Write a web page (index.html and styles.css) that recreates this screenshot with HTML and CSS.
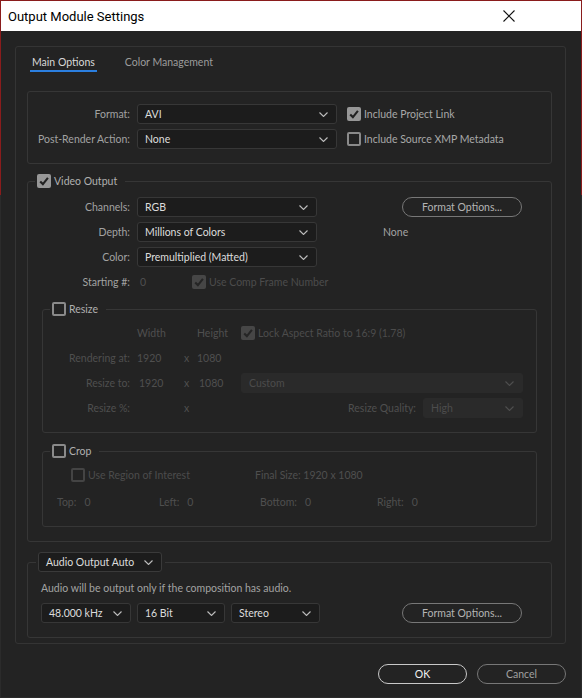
FILE: index.html
```html
<!DOCTYPE html>
<html lang="en">
<head>
    <meta charset="UTF-8">
    <title>Output Module Settings</title>
    <link rel="stylesheet" href="styles.css">
</head>
<body>
    <div class="window">
        <header class="titlebar">
            <span class="title">Output Module Settings</span>
            <span class="close">
                <svg width="12" height="12" viewBox="0 0 12 12"><path d="M0.5 0.5 L11.5 11.5 M11.5 0.5 L0.5 11.5" stroke="#111" stroke-width="1.1" fill="none"/></svg>
            </span>
        </header>

        <div class="dialog">
            <div class="panel">
                <nav class="tabs">
                    <span class="tab active">Main Options</span>
                    <span class="tab">Color Management</span>
                </nav>

                <section class="box format-box">
                    <span class="label">Format:</span>
                    <div class="select"><span>AVI</span><svg class="chev" width="9" height="5" viewBox="0 0 9 5"><path d="M0.5 0.5 L4.5 4.5 L8.5 0.5"/></svg></div>
                    <label class="check on"><span class="cb"><svg width="14" height="14" viewBox="0 0 14 14"><path d="M3.2 7.4 L5.9 10.1 L10.9 3.9"/></svg></span>Include Project Link</label>

                    <span class="label">Post-Render Action:</span>
                    <div class="select"><span>None</span><svg class="chev" width="9" height="5" viewBox="0 0 9 5"><path d="M0.5 0.5 L4.5 4.5 L8.5 0.5"/></svg></div>
                    <label class="check"><span class="cb"></span>Include Source XMP Metadata</label>
                </section>

                <fieldset class="group video">
                    <legend><label class="check on legend-check"><span class="cb"><svg width="14" height="14" viewBox="0 0 14 14"><path d="M3.2 7.4 L5.9 10.1 L10.9 3.9"/></svg></span>Video Output</label></legend>

                    <div class="video-grid">
                        <span class="label">Channels:</span>
                        <div class="select"><span>RGB</span><svg class="chev" width="9" height="5" viewBox="0 0 9 5"><path d="M0.5 0.5 L4.5 4.5 L8.5 0.5"/></svg></div>
                        <div class="side"><button class="pill opts">Format Options...</button></div>

                        <span class="label">Depth:</span>
                        <div class="select"><span>Millions of Colors</span><svg class="chev" width="9" height="5" viewBox="0 0 9 5"><path d="M0.5 0.5 L4.5 4.5 L8.5 0.5"/></svg></div>
                        <div class="side"><span class="codec">None</span></div>

                        <span class="label">Color:</span>
                        <div class="select"><span>Premultiplied (Matted)</span><svg class="chev" width="9" height="5" viewBox="0 0 9 5"><path d="M0.5 0.5 L4.5 4.5 L8.5 0.5"/></svg></div>
                        <div></div>

                        <span class="label">Starting #:</span>
                        <div class="start-row">
                            <span class="dim start-num">0</span>
                            <label class="check on off"><span class="cb"><svg width="14" height="14" viewBox="0 0 14 14"><path d="M3.2 7.4 L5.9 10.1 L10.9 3.9"/></svg></span>Use Comp Frame Number</label>
                        </div>
                        <div></div>
                    </div>

                    <fieldset class="group sub resize">
                        <legend><label class="check legend-check"><span class="cb"></span>Resize</label></legend>
                        <div class="resize-grid">
                            <span></span>
                            <span class="dim">Width</span>
                            <span></span>
                            <span class="dim">Height</span>
                            <label class="check on off"><span class="cb"><svg width="14" height="14" viewBox="0 0 14 14"><path d="M3.2 7.4 L5.9 10.1 L10.9 3.9"/></svg></span>Lock Aspect Ratio to 16:9 (1.78)</label>

                            <span class="label dim">Rendering at:</span>
                            <span class="dim">1920</span>
                            <span class="dim times">x</span>
                            <span class="dim">1080</span>
                            <span></span>

                            <span class="label dim">Resize to:</span>
                            <span class="dim field">1920</span>
                            <span class="dim times">x</span>
                            <span class="dim field">1080</span>
                            <div class="select off"><span>Custom</span><svg class="chev" width="9" height="5" viewBox="0 0 9 5"><path d="M0.5 0.5 L4.5 4.5 L8.5 0.5"/></svg></div>

                            <span class="label dim">Resize %:</span>
                            <span></span>
                            <span class="dim times">x</span>
                            <span></span>
                            <div class="quality">
                                <span class="dim">Resize Quality:</span>
                                <div class="select off quality-select"><span>High</span><svg class="chev" width="9" height="5" viewBox="0 0 9 5"><path d="M0.5 0.5 L4.5 4.5 L8.5 0.5"/></svg></div>
                            </div>
                        </div>
                    </fieldset>

                    <fieldset class="group sub crop">
                        <legend><label class="check legend-check"><span class="cb"></span>Crop</label></legend>
                        <div class="crop-top">
                            <label class="check off"><span class="cb"></span>Use Region of Interest</label>
                            <span class="dim">Final Size: 1920 x 1080</span>
                        </div>
                        <div class="crop-edges">
                            <div class="edge"><span class="dim">Top:</span><span class="dim">0</span></div>
                            <div class="edge"><span class="dim">Left:</span><span class="dim">0</span></div>
                            <div class="edge"><span class="dim">Bottom:</span><span class="dim">0</span></div>
                            <div class="edge"><span class="dim">Right:</span><span class="dim">0</span></div>
                        </div>
                    </fieldset>
                </fieldset>

                <fieldset class="group audio">
                    <legend><div class="select audio-mode"><span>Audio Output Auto</span><svg class="chev" width="9" height="5" viewBox="0 0 9 5"><path d="M0.5 0.5 L4.5 4.5 L8.5 0.5"/></svg></div></legend>
                    <p class="audio-note">Audio will be output only if the composition has audio.</p>
                    <div class="audio-row">
                        <div class="select rate"><span>48.000 kHz</span><svg class="chev" width="9" height="5" viewBox="0 0 9 5"><path d="M0.5 0.5 L4.5 4.5 L8.5 0.5"/></svg></div>
                        <div class="select bits"><span>16 Bit</span><svg class="chev" width="9" height="5" viewBox="0 0 9 5"><path d="M0.5 0.5 L4.5 4.5 L8.5 0.5"/></svg></div>
                        <div class="select chans"><span>Stereo</span><svg class="chev" width="9" height="5" viewBox="0 0 9 5"><path d="M0.5 0.5 L4.5 4.5 L8.5 0.5"/></svg></div>
                        <button class="pill opts audio-opts">Format Options...</button>
                    </div>
                </fieldset>
            </div>

            <div class="actions">
                <button class="pill ok">OK</button>
                <button class="pill cancel">Cancel</button>
            </div>
        </div>
    </div>
</body>
</html>
```

FILE: styles.css
```css
* {
    box-sizing: border-box;
}

body {
    margin: 0;
    background-color: #232323;
    font-family: Lato, 'Noto Sans', sans-serif;
    font-size: 10.5px;
    color: #a2a2a2;
}

.window {
    width: 582px;
    height: 698px;
    border: 1px solid;
    border-image: linear-gradient(#8a1c1c 0 195px, #2b2b2b 195px) 1;
    background-color: #232323;
}

.titlebar {
    height: 30px;
    background-color: #fff;
    display: flex;
    align-items: center;
    justify-content: space-between;
    padding-left: 7px;
}

.title {
    font-family: Roboto, sans-serif;
    font-size: 13px;
    color: #000;
}

.close {
    display: flex;
    margin-right: 66px;
}

.dialog {
    padding: 15px 14px 0;
}

.panel {
    width: 551px;
    border: 1px solid #343434;
    border-radius: 3px;
    padding: 0 13px 5px 11px;
}

.tabs {
    display: flex;
    gap: 26px;
    padding: 7px 0 0 3px;
    margin-bottom: 19px;
}

.tab {
    line-height: 16px;
    padding: 0 2px;
    border-bottom: 2px solid transparent;
    color: #9c9c9c;
}

.tab.active {
    color: #d8d8d8;
    border-bottom-color: #2b7fe0;
}

.box {
    border: 1px solid #363636;
    border-radius: 3px;
}

.format-box {
    display: grid;
    grid-template-columns: 102px 200px auto;
    grid-auto-rows: 20px;
    column-gap: 7px;
    row-gap: 5px;
    align-items: center;
    padding: 12px 0 14px;
}

.format-box .check {
    margin-left: 3px;
}

.label {
    text-align: right;
    color: #a2a2a2;
    white-space: nowrap;
}

.select {
    height: 20px;
    display: flex;
    align-items: center;
    justify-content: space-between;
    padding: 0 8px 0 7px;
    background-color: #1c1c1c;
    border: 1px solid #373737;
    border-radius: 3px;
    color: #dcdcdc;
    white-space: nowrap;
}

.chev {
    fill: none;
    stroke: #bdbdbd;
    stroke-width: 1.1;
}

.select.off {
    background-color: #2a2a2a;
    border-color: #2a2a2a;
    color: #4c4c4c;
}

.select.off .chev {
    stroke: #4f4f4f;
}

.check {
    display: flex;
    align-items: center;
    gap: 3px;
    color: #a8a8a8;
    white-space: nowrap;
}

.cb {
    width: 14px;
    height: 14px;
    border: 2px solid #8a8a8a;
    border-radius: 2px;
    display: flex;
    align-items: center;
    justify-content: center;
    flex-shrink: 0;
}

.cb svg {
    fill: none;
    stroke: #222;
    stroke-width: 2.1;
}

.check.on .cb {
    border: none;
    background-color: #979797;
}

.check.off {
    color: #4c4c4c;
}

.check.off .cb {
    border-color: #444;
}

.check.on.off .cb {
    background-color: #464646;
}

.check.on.off .cb svg {
    stroke: #252525;
}

.dim {
    color: #4f4f4f;
    white-space: nowrap;
}

.group {
    margin: 0;
    min-width: 0;
    padding: 0 0 14px;
    border: 1px solid #363636;
    border-radius: 3px;
}

.group legend {
    margin-left: 7px;
    padding: 0 8px 0 2px;
}

.legend-check {
    height: 14px;
    line-height: 14px;
    color: #b0b0b0;
}

.video {
    margin-top: 10px;
}

.video-grid {
    display: grid;
    grid-template-columns: 102px 180px 1fr;
    grid-auto-rows: 20px;
    column-gap: 7px;
    row-gap: 5px;
    align-items: center;
    margin-top: 9px;
}

.side {
    display: flex;
}

.video-grid .opts {
    margin-left: 78px;
}

.codec {
    margin-left: 59px;
    color: #a2a2a2;
}

.start-row {
    display: flex;
    align-items: center;
}

.start-num {
    width: 55px;
    flex-shrink: 0;
    padding-left: 3px;
}

.pill {
    height: 20px;
    padding: 0;
    border: 1px solid #777;
    border-radius: 10px;
    background-color: transparent;
    font-family: inherit;
    font-size: 10.5px;
    color: #b4b4b4;
}

.opts {
    width: 120px;
}

.sub {
    margin: 10px 14px 0;
    padding-right: 13px;
}

.sub legend {
    margin-left: 7px;
    padding: 0 8px 0 2px;
}

.resize-grid {
    display: grid;
    grid-template-columns: 94px 46px 14px 44px 1fr;
    grid-auto-rows: 20px;
    row-gap: 5px;
    align-items: center;
    margin-top: 7px;
}

.resize-grid .label {
    padding-right: 7px;
}

.times {
    padding-left: 1px;
}

.field {
    padding-left: 2px;
}

.quality {
    display: flex;
    align-items: center;
    justify-content: flex-end;
    gap: 7px;
}

.quality-select {
    width: 100px;
}

.crop {
    margin-top: 11px;
}

.crop-top {
    display: grid;
    grid-template-columns: 184px 1fr;
    align-items: center;
    height: 20px;
    margin-top: 7px;
    padding-left: 28px;
}

.crop-edges {
    display: grid;
    grid-template-columns: 102px 101px 117px 1fr;
    align-items: center;
    height: 20px;
    margin-top: 7px;
    padding-left: 14px;
}

.edge {
    display: flex;
    gap: 8px;
}

.audio {
    margin-top: 10px;
    padding-right: 29px;
}

.audio legend {
    margin-left: 8px;
    padding: 0 3px 0 2px;
}

.audio-mode {
    width: 124px;
    padding-left: 7px;
    border-color: #3a3a3a;
}

.audio-note {
    margin: 8px 0 0 13px;
    line-height: 16px;
    color: #a2a2a2;
}

.audio-row {
    display: flex;
    align-items: center;
    gap: 6px;
    margin: 7px 0 0 13px;
}

.rate {
    width: 90px;
}

.bits {
    width: 88px;
}

.chans {
    width: 89px;
}

.audio-opts {
    margin-left: auto;
}

.actions {
    width: 551px;
    display: flex;
    justify-content: flex-end;
    gap: 10px;
    margin-top: 20px;
}

.actions .pill {
    width: 89px;
}

.ok {
    border-color: #c8c8c8;
    color: #f2f2f2;
}

.cancel {
    border-color: #777;
    color: #a0a0a0;
}
```
